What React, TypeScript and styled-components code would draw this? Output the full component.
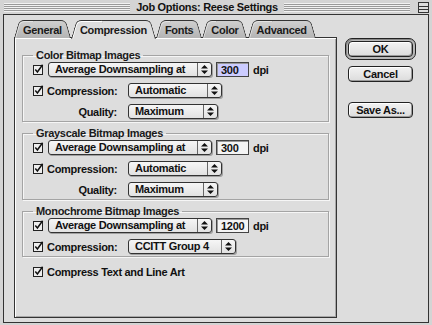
import React from "react";
import styled, { createGlobalStyle } from "styled-components";

const GlobalStyle = createGlobalStyle`
  html, body {
    margin: 0;
    padding: 0;
    background: #dddddd;
  }
  body {
    font-family: "Liberation Sans", Arial, sans-serif;
    font-weight: bold;
    font-size: 11px;
    letter-spacing: -0.3px;
    color: #111;
  }
`;

const Window = styled.div`
  width: 432px;
  height: 325px;
  box-sizing: border-box;
  background: #d4d4d4;
  display: flex;
  flex-direction: column;
  overflow: hidden;
`;

const TitleBar = styled.div`
  height: 14px;
  display: flex;
  align-items: center;
  gap: 6px;
  padding: 0 3px 0 4px;
`;

const Stripes = styled.div`
  flex: 1;
  height: 9px;
  background: repeating-linear-gradient(to bottom, #f2f2f2 0 1px, #9a9a9a 1px 2px);
`;

const Title = styled.div`
  line-height: 14px;
  color: #111;
  white-space: nowrap;
`;

const CollapseBox = styled.div`
  width: 9px;
  height: 9px;
  margin-left: 2px;
  border: 1px solid #333;
  background: linear-gradient(to bottom, #ddd 0 3px, #333 3px 4px, #ddd 4px 6px, #333 6px 7px, #ddd 7px);
`;

const Body = styled.div`
  flex: 1;
  margin: 0 3px 2px 3px;
  border: 1px solid #333;
  background: #dddddd;
  display: flex;
`;

const LeftCol = styled.div`
  padding: 5px 0 0 10px;
  display: flex;
  flex-direction: column;
`;

const TabRow = styled.div`
  display: flex;
  height: 18px;
  margin-bottom: -1px;
  position: relative;
  z-index: 2;
`;

const Tab = styled.div<{ $active?: boolean }>`
  position: relative;
  z-index: ${(p) => (p.$active ? 2 : 1)};
  padding: 0 9px;
  height: 18px;
  line-height: 20px;
  color: #1a1a1a;
  white-space: nowrap;

  &::before,
  &::after {
    content: "";
    position: absolute;
    top: 0;
    bottom: ${(p) => (p.$active ? "-1px" : "0")};
    width: 56%;
    z-index: -1;
    border-top: 1px solid #333;
    background: ${(p) =>
      p.$active
        ? "#dddddd"
        : "linear-gradient(to bottom, #cfcfcf, #b4b4b4)"};
  }

  &::before {
    left: 0;
    border-left: 1px solid #333;
    border-top-left-radius: 5px;
    box-shadow: ${(p) => (p.$active ? "inset 1px 1px 0 #fff" : "inset 1px 1px 0 #e4e4e4")};
    transform: skewX(-16deg);
    transform-origin: bottom left;
  }

  &::after {
    right: 0;
    border-right: 1px solid #333;
    border-top-right-radius: 5px;
    transform: skewX(16deg);
    transform-origin: bottom right;
  }
`;

const Panel = styled.div`
  width: 323px;
  height: 281px;
  box-sizing: border-box;
  border: 1px solid #333;
  box-shadow: inset 1px 1px 0 #fff, inset -1px -1px 0 #a8a8a8;
  padding: 11px 7px 0 7px;
  display: flex;
  flex-direction: column;
  gap: 5px;
`;

const Group = styled.fieldset`
  margin: 0;
  padding: 1px 4px 2px 10px;
  border: 1px solid #a4a4a4;
  box-shadow: 1px 1px 0 #f6f6f6, inset 1px 1px 0 #f6f6f6;
  display: flex;
  flex-direction: column;
  gap: 6px;
`;

const Legend = styled.legend`
  padding: 0 3px;
  line-height: 12px;
  color: #1a1a1a;
`;

const Row = styled.div`
  height: 15px;
  display: flex;
  align-items: center;
`;

const LabelCell = styled.div<{ $right?: boolean }>`
  width: 95px;
  box-sizing: border-box;
  display: flex;
  align-items: center;
  gap: 3px;
  justify-content: ${(p) => (p.$right ? "flex-end" : "flex-start")};
  padding-right: ${(p) => (p.$right ? "11px" : "0")};
  white-space: nowrap;
`;

const Box = styled.svg`
  flex: none;
  display: block;
`;

const PopupBox = styled.div<{ $w: number }>`
  width: ${(p) => p.$w}px;
  height: 15px;
  box-sizing: border-box;
  border: 1px solid #333;
  border-radius: 3px;
  background: linear-gradient(to bottom, #f6f6f6, #e2e2e2);
  box-shadow: 1px 1px 0 #a0a0a0;
  display: flex;
  align-items: center;
  flex: none;
`;

const PopupText = styled.div`
  flex: 1;
  padding-left: 6px;
  line-height: 13px;
  white-space: nowrap;
  overflow: hidden;
`;

const PopupArrows = styled.div`
  width: 13px;
  height: 100%;
  border-left: 1px solid #666;
  display: flex;
  align-items: center;
  justify-content: center;
`;

const Field = styled.div<{ $sel?: boolean }>`
  width: 33px;
  height: 15px;
  box-sizing: border-box;
  margin-left: 4px;
  border: 1px solid #444;
  box-shadow: inset 1px 1px 0 #999;
  background: ${(p) => (p.$sel ? "#ccccff" : "#f4f4f4")};
  padding-left: 4px;
  line-height: 14px;
`;

const Unit = styled.span`
  margin-left: 4px;
`;

const Gap = styled.div<{ $w: number }>`
  width: ${(p) => p.$w}px;
  flex: none;
`;

const LooseRow = styled(Row)`
  padding-left: 11px;
  margin-top: 2px;
  gap: 3px;
`;

const RightCol = styled.div`
  flex: 1;
  display: flex;
  flex-direction: column;
  align-items: center;
  padding: 23px 4px 0 0;
`;

const DefaultRing = styled.div`
  padding: 2px;
  border: 1px solid #222;
  border-radius: 7px;
  background: #b8b8b8;
  box-shadow: inset 1px 1px 0 #888;
`;

const Button = styled.div<{ $top?: number }>`
  width: 65px;
  height: 16px;
  box-sizing: border-box;
  margin-top: ${(p) => p.$top ?? 0}px;
  border: 1px solid #222;
  border-radius: 4px;
  background: linear-gradient(to bottom, #f2f2f2, #dcdcdc);
  box-shadow: inset -1px -1px 0 #9a9a9a, inset 1px 1px 0 #fff;
  text-align: center;
  line-height: 15px;
  color: #111;
`;

const Check = () => (
  <Box width="11" height="11" viewBox="0 0 11 11">
    <rect x="0.5" y="1.5" width="9" height="9" fill="#eeeeee" stroke="#222" />
    <path d="M2.3 5.6 L4.4 8 L9.6 0.8" fill="none" stroke="#111" strokeWidth="1.5" />
  </Box>
);

const Popup = ({ w, value }: { w: number; value: string }) => (
  <PopupBox $w={w}>
    <PopupText>{value}</PopupText>
    <PopupArrows>
      <svg width="7" height="9" viewBox="0 0 7 9">
        <path d="M3.5 0 L7 3.5 L0 3.5 Z M0 5.5 L7 5.5 L3.5 9 Z" fill="#111" />
      </svg>
    </PopupArrows>
  </PopupBox>
);

interface GroupProps {
  title: string;
  dpi: string;
  sel?: boolean;
  compression: string;
  compW: number;
  quality?: boolean;
}

const ImageGroup = ({ title, dpi, sel, compression, compW, quality }: GroupProps) => (
  <Group>
    <Legend>{title}</Legend>
    <Row>
      <Check />
      <Gap $w={4} />
      <Popup w={164} value="Average Downsampling at" />
      <Field $sel={sel}>{dpi}</Field>
      <Unit>dpi</Unit>
    </Row>
    <Row>
      <LabelCell>
        <Check />
        Compression:
      </LabelCell>
      <Popup w={compW} value={compression} />
    </Row>
    {quality && (
      <Row>
        <LabelCell $right>Quality:</LabelCell>
        <Popup w={90} value="Maximum" />
      </Row>
    )}
  </Group>
);

const tabs = ["General", "Compression", "Fonts", "Color", "Advanced"];

export default function App() {
  return (
    <>
      <GlobalStyle />
      <Window>
        <TitleBar>
          <Stripes />
          <Title>Job Options: Reese Settings</Title>
          <Stripes />
          <CollapseBox />
        </TitleBar>
        <Body>
          <LeftCol>
            <TabRow>
              {tabs.map((t) => (
                <Tab key={t} $active={t === "Compression"}>
                  {t}
                </Tab>
              ))}
            </TabRow>
            <Panel>
              <ImageGroup
                title="Color Bitmap Images"
                dpi="300"
                sel
                compression="Automatic"
                compW={94}
                quality
              />
              <ImageGroup
                title="Grayscale Bitmap Images"
                dpi="300"
                compression="Automatic"
                compW={94}
                quality
              />
              <ImageGroup
                title="Monochrome Bitmap Images"
                dpi="1200"
                compression="CCITT Group 4"
                compW={108}
              />
              <LooseRow>
                <Check />
                Compress Text and Line Art
              </LooseRow>
            </Panel>
          </LeftCol>
          <RightCol>
            <DefaultRing>
              <Button>OK</Button>
            </DefaultRing>
            <Button $top={6}>Cancel</Button>
            <Button $top={20}>Save As...</Button>
          </RightCol>
        </Body>
      </Window>
    </>
  );
}
